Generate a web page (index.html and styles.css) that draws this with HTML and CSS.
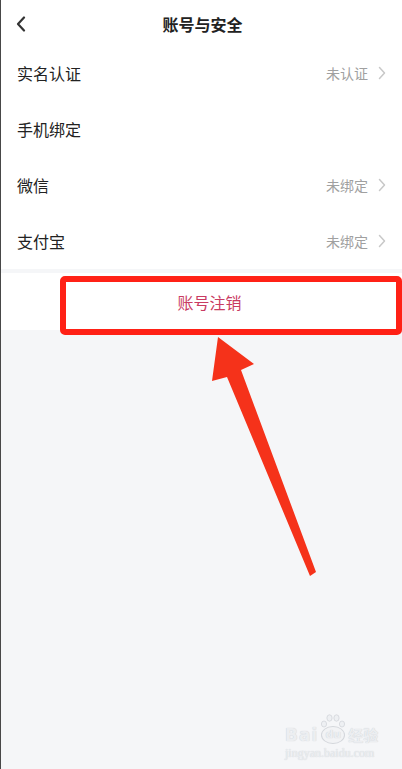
FILE: index.html
```html
<!DOCTYPE html>
<html lang="zh">
<head>
<meta charset="utf-8">
<link rel="stylesheet" href="styles.css">
</head>
<body>
<div class="page">
  <header class="header">
    <svg class="back" width="10" height="16" viewBox="0 0 10 16"><path d="M8 1.5 L2 8 L8 14.5" fill="none" stroke="#333" stroke-width="2.2" stroke-linecap="round" stroke-linejoin="round"/></svg>
    <div class="title">账号与安全</div>
  </header>
  <section class="list">
    <div class="row"><span class="label">实名认证</span><span class="value">未认证</span><svg class="chev" width="8" height="14" viewBox="0 0 8 14"><path d="M1.5 1.5 L6.5 7 L1.5 12.5" fill="none" stroke="#c8c8c8" stroke-width="1.5" stroke-linecap="round" stroke-linejoin="round"/></svg></div>
    <div class="row"><span class="label">手机绑定</span></div>
    <div class="row"><span class="label">微信</span><span class="value">未绑定</span><svg class="chev" width="8" height="14" viewBox="0 0 8 14"><path d="M1.5 1.5 L6.5 7 L1.5 12.5" fill="none" stroke="#c8c8c8" stroke-width="1.5" stroke-linecap="round" stroke-linejoin="round"/></svg></div>
    <div class="row"><span class="label">支付宝</span><span class="value">未绑定</span><svg class="chev" width="8" height="14" viewBox="0 0 8 14"><path d="M1.5 1.5 L6.5 7 L1.5 12.5" fill="none" stroke="#c8c8c8" stroke-width="1.5" stroke-linecap="round" stroke-linejoin="round"/></svg></div>
  </section>
  <section class="logout">账号注销</section>
  <div class="rest"></div>

  <div class="highlight"></div>
  <svg class="arrow" width="402" height="769" viewBox="0 0 402 769"><polygon points="218,337 254,364 241,370 316,572 310,576 227,377 212,381" fill="#f5321a"/></svg>

  <div class="watermark">
    <div class="wm-top">
      <span class="wm-bai">Bai</span>
      <span class="wm-pawbox">
        <svg class="wm-toes" width="26" height="14" viewBox="0 0 26 14"><g fill="#eef0f3" stroke="#d3d6db" stroke-width="0.8"><ellipse cx="4" cy="10" rx="2.6" ry="3"/><ellipse cx="9.5" cy="4" rx="2.6" ry="3.2"/><ellipse cx="16.5" cy="4" rx="2.6" ry="3.2"/><ellipse cx="22" cy="10" rx="2.6" ry="3"/></g></svg>
        <span class="wm-paw">du</span>
      </span>
      <span class="wm-jy">经验</span>
    </div>
    <div class="wm-url">jingyan.baidu.com</div>
  </div>
</div>
</body>
</html>
```

FILE: styles.css
```css
html, body {
  margin: 0;
  padding: 0;
}
body {
  width: 402px;
  height: 769px;
  overflow: hidden;
  font-family: "Noto Sans CJK SC", "Noto Sans", sans-serif;
  background: #f5f6f8;
}
.page {
  position: relative;
  height: 769px;
  border-left: 1px solid #484848;
  box-sizing: border-box;
  display: flex;
  flex-direction: column;
  background: #f5f6f8;
}
.header {
  height: 45px;
  background: #fff;
  display: flex;
  align-items: center;
  justify-content: center;
  position: relative;
}
.back {
  position: absolute;
  left: 15px;
  top: 16px;
}
.title {
  font-size: 16px;
  font-weight: 600;
  color: #222;
  margin-top: 2px;
  margin-left: 2px;
}
.list {
  background: #fff;
}
.row {
  height: 56px;
  display: flex;
  align-items: center;
  padding: 0 16px 0 16px;
}
.label {
  font-size: 16px;
  color: #222;
  flex: 1;
}
.value {
  font-size: 14px;
  color: #a0a0a0;
  margin-right: 10px;
}
.chev {
  display: block;
}
.logout {
  margin-top: 4px;
  height: 57px;
  background: #fff;
  display: flex;
  align-items: center;
  justify-content: center;
  padding-left: 16px;
  font-size: 16px;
  color: #c93b62;
}
.rest {
  flex: 1;
}
.highlight {
  position: absolute;
  left: 59px;
  top: 276px;
  width: 342px;
  height: 59px;
  box-sizing: border-box;
  border: 6px solid #ff2116;
  border-radius: 5px;
}
.arrow {
  position: absolute;
  left: -1px;
  top: 0;
}
.watermark {
  position: absolute;
  left: 284px;
  top: 714px;
  color: #eceef1;
  text-shadow: 0 0 1px #c4c8ce;
  font-family: "DejaVu Sans", sans-serif;
}
.wm-top {
  display: flex;
  align-items: flex-end;
  gap: 2px;
}
.wm-bai {
  font-size: 17px;
  font-weight: bold;
  letter-spacing: 1px;
}
.wm-pawbox {
  display: flex;
  flex-direction: column;
  align-items: center;
  width: 26px;
}
.wm-toes {
  display: block;
  margin-bottom: -2px;
}
.wm-paw {
  font-size: 11px;
  font-weight: bold;
  width: 22px;
  height: 16px;
  border-radius: 50%;
  border: 1px solid #d3d6db;
  background: #f2f3f5;
  text-align: center;
  line-height: 16px;
  margin-bottom: 1px;
}
.wm-jy {
  font-family: "Noto Sans CJK SC", sans-serif;
  font-size: 15px;
  font-weight: bold;
}
.wm-url {
  font-family: "Liberation Serif", serif;
  font-size: 12px;
  margin-top: 1px;
}
```
